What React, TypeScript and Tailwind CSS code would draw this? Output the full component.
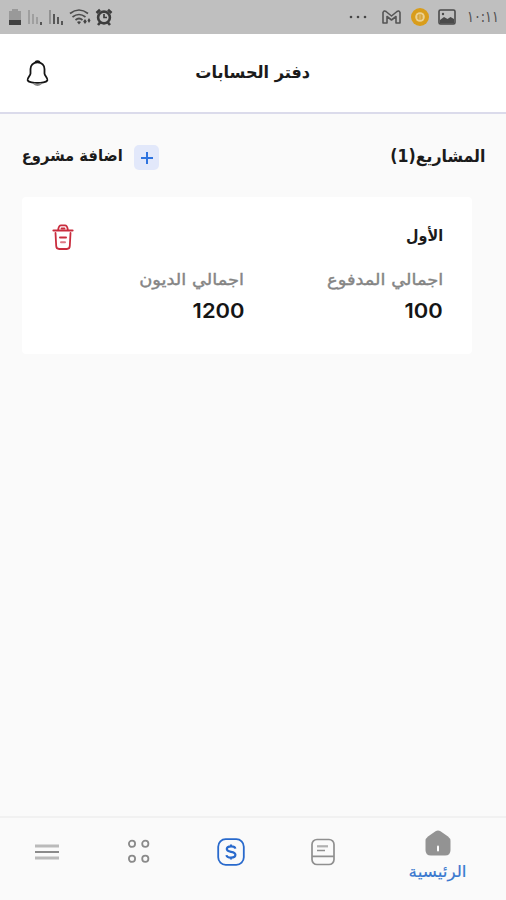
import type { ReactNode } from 'react'

interface Project {
  id: number
  name: string
  paid: number
  debts: number
}

const projects: Project[] = [{ id: 1, name: 'الأول', paid: 100, debts: 1200 }]

function StatusBar() {
  return (
    <div dir="ltr" className="flex h-[34px] shrink-0 items-center justify-between bg-[#bfbfbf] pl-[9px] pr-2 text-[#505050]">
      <div className="flex items-center">
        {/* Battery */}
        <svg className="h-[18px] w-3" viewBox="0 0 12 18">
          <path d="M3 1h6v2h3v14H0V3h3z" fill="#999" />
          <path d="M0 12h12v5H0z" fill="#414141" />
        </svg>
        {/* Signal */}
        <svg className="ml-[7px] h-[18px] w-4" viewBox="0 0 16 18" fill="none" strokeWidth="1.5">
          <path d="M1 2v14M5 6v10M9 9v7" stroke="#959595" />
          <path d="M13 14v3" stroke="#555" strokeWidth="2" />
        </svg>
        <svg className="ml-[5px] h-[18px] w-4" viewBox="0 0 16 18" fill="none" strokeWidth="1.8">
          <path d="M1 2v14" stroke="#8d8d8d" />
          <path d="M5 6v10M9 9v7M13 13v4" stroke="#4c4c4c" />
        </svg>
        {/* Wifi */}
        <svg className="ml-1 h-[18px] w-[22px]" viewBox="0 0 22 18" fill="none" stroke="#4c4c4c" strokeWidth="1.7">
          <path d="M1 5.5q9-7 18 0M3.5 9q6.5-5 13 0M6.5 12q3.5-3 7 0" />
          <path d="M8 14l2 2.5 2-2.5q-2-1.500-4 0z" fill="#444" stroke="none" />
          <path d="M16 11l1.800 2.500L16 16l-1.800-2.500zM20 10l1.500 2.500L20 15l-1.500-2.500z" fill="#444" stroke="none" />
        </svg>
        {/* Alarm */}
        <svg className="ml-1 h-[18px] w-[18px]" viewBox="0 0 18 18" fill="none" stroke="#3d3d3d">
          <circle cx="9" cy="9.500" r="5.900" strokeWidth="2.600" />
          <path d="M1.500 5L5 1.700M16.500 5L13 1.700M3 17l2.500-3M15 17l-2.500-3" strokeWidth="2.600" />
          <path d="M9 6v3.500h3" strokeWidth="1.700" />
        </svg>
      </div>
      <div className="flex items-center">
        <svg className="h-1 w-[18px]" viewBox="0 0 18 4" fill="#464646">
          <circle cx="2" cy="2" r="1.300" />
          <circle cx="9" cy="2" r="1.300" />
          <circle cx="16" cy="2" r="1.300" />
        </svg>
        {/* Mail */}
        <svg className="ml-[15px] h-[14px] w-[19px]" viewBox="0 0 19 14" fill="none" stroke="#555" strokeWidth="1.600">
          <path d="M1 13V2.500Q2 0 4 1.500L9.500 6 15 1.500Q17 0 18 2.500V13h-4V6.500L9.500 10 5 6.500V13z" strokeLinejoin="round" />
        </svg>
        {/* Coin */}
        <svg className="ml-[10px] h-[18px] w-[18px]" viewBox="0 0 18 18">
          <circle cx="9" cy="9" r="9" fill="#d99d1b" />
          <circle cx="9" cy="9" r="4.800" fill="#ecd190" />
          <path d="M7 7h4v4H7zM7 9h4" fill="none" stroke="#cf961f" />
        </svg>
        {/* Image */}
        <svg className="ml-[9px] h-4 w-[18px]" viewBox="0 0 18 16">
          <rect x="1" y="1" width="16" height="14" rx="1.500" fill="none" stroke="#4a4a4a" strokeWidth="1.600" />
          <path d="M2 11l4-3 3.500 2L12.500 8l3.500 2v4.500H2z" fill="#4a4a4a" />
          <circle cx="5" cy="5" r="1.200" fill="#4a4a4a" />
        </svg>
        <span className="ml-[11px] w-[31px] whitespace-nowrap text-[16px] leading-none">
          <span className="inline-block origin-left scale-x-[.8]">١٠:١١</span>
        </span>
      </div>
    </div>
  )
}

function Header() {
  return (
    <header className="grid h-20 shrink-0 grid-cols-3 items-center border-b-2 border-[#dbdbeb] bg-white px-[26px]">
      <span />
      <h1 className="mb-0.5 justify-self-center whitespace-nowrap text-[17px] font-bold leading-6 text-[#1b1b1b]">
        <span className="inline-block scale-x-[.945]">دفتر الحسابات</span>
      </h1>
      {/* Bell */}
      <svg className="h-[27px] w-[23px] justify-self-end" viewBox="0 0 23 27" fill="none" stroke="#151515">
        <path
          d="M11.500 2.300C7 2.300 4.500 5.500 4.500 9v4.500c0 2-3.200 4.500-2.900 6.500.300 1.500 2.200 2 4 2.300 3.800.700 8 .700 11.800 0 1.800-.300 3.700-.800 4-2.300.300-2-2.900-4.500-2.900-6.500V9c0-3.500-2.500-6.700-7-6.700z"
          strokeWidth="1.800"
        />
        <path d="M9.300 2.200q2.200-1.800 4.400 0" strokeWidth="2.200" />
        <path d="M8 23.500q3.500 3 7 0" stroke="#888" strokeWidth="2" />
      </svg>
    </header>
  )
}

function TrashIcon() {
  return (
    <svg className="h-[26px] w-[22px]" viewBox="0 0 22 26" fill="none" stroke="#c92d3e" strokeWidth="1.800" strokeLinecap="round">
      <path d="M1.500 6.500h19" strokeWidth="2.200" />
      <path d="M6.200 5.500C6.700 2.500 7.500 1.300 9 1.300h4c1.500 0 2.300 1.200 2.800 4.200M9.500 4.500h3" />
      <path d="M3.500 9l.700 13c.100 2 1 3 3 3h7.600c2 0 2.900-1 3-3l.700-13" />
      <path d="M8 13.500h6" strokeWidth="2" />
      <path d="M9 18.300h4" stroke="#dd7a85" strokeWidth="2" />
    </svg>
  )
}

function Stat({ label, value }: { label: ReactNode; value: number }) {
  return (
    <div className="flex flex-col items-start">
      <span className="h-6 whitespace-nowrap text-[16px] leading-6 text-[#858585] [-webkit-text-stroke:.4px_#858585]">
        <span className="inline-block origin-right scale-x-[1.115]">{label}</span>
      </span>
      <span className="mt-[5px] font-[Inter] text-[20.5px] font-semibold leading-7 text-[#151515]">
        <span className="inline-block origin-right scale-x-[1.07]">{value}</span>
      </span>
    </div>
  )
}

function ProjectCard({ project }: { project: Project }) {
  return (
    <article className="ml-[22px] mr-[34px] mt-[26px] h-[157px] rounded-[4px] bg-white pl-[30px] pr-[29px] pt-[26px]">
      <div className="flex h-7 items-center justify-between">
        <h3 className="mb-0.5 text-[16px] font-bold leading-6 text-[#1b1b1b]">
          <span className="inline-block origin-right scale-x-[.9]">{project.name}</span>
        </h3>
        <button>
          <TrashIcon />
        </button>
      </div>
      <div className="mt-[17px] grid grid-cols-[199px_1fr]">
        <Stat label="اجمالي المدفوع" value={project.paid} />
        <Stat label="اجمالي الديون" value={project.debts} />
      </div>
    </article>
  )
}

function BottomNav() {
  return (
    <nav className="grid h-[84px] shrink-0 grid-cols-[137px_92px_92px_92px_93px] border-t-2 border-[#f1f1f1] bg-[#fafafa] pt-[12px] text-[#8f8f8f]">
      {/* Home */}
      <div className="flex flex-col items-center">
        <svg className="h-[26px] w-[26px]" viewBox="0 0 26 26">
          <path d="M10.500 1.200q2.500-1.500 5 0l7.500 5.300q2.500 1.800 2.500 4.500v9q0 5.500-5.500 5.500H6q-5.500 0-5.500-5.500v-9q0-2.700 2.500-4.500z" fill="#939393" />
          <path d="M13 16.500v4" stroke="#fff" strokeWidth="2" strokeLinecap="round" />
        </svg>
        <span className="mt-1 whitespace-nowrap text-[16px] leading-6 text-[#3978cf] [-webkit-text-stroke:.2px_#3978cf]">
          <span className="inline-block scale-x-[1.05]">الرئيسية</span>
        </span>
      </div>
      {/* Ledger */}
      <div className="flex justify-center pt-2">
        <svg className="h-[28px] w-6" viewBox="0 0 24 28" fill="none" stroke="currentColor" strokeWidth="1.700">
          <rect x="1" y="1.500" width="22" height="25" rx="5" />
          <path d="M1 18.300h22M6 12.500h8" />
          <path d="M6 8.300h11" stroke="#b0b0b0" strokeWidth="2.200" />
        </svg>
      </div>
      {/* Accounts */}
      <div className="flex justify-center pt-2">
        <svg className="h-7 w-7" viewBox="0 0 28 28" fill="none" stroke="#2869cc" strokeWidth="1.800">
          <rect x="1.200" y="1.200" width="25.600" height="25.600" rx="7.500" />
          <path
            d="M18.300 10.600c-.200-1.400-1.900-2.200-4.300-2.200s-4.200.900-4.200 2.700 1.900 2.300 4.200 2.700 4.400 1.100 4.400 3-2 2.800-4.400 2.800-4.300-.900-4.500-2.500M14 6.500v2M14 19.500v2"
            strokeWidth="2.200"
          />
        </svg>
      </div>
      {/* More */}
      <div className="flex justify-center pt-[8px]">
        <svg className="h-[26px] w-6" viewBox="0 0 24 26" fill="none" stroke="#8a8a8a" strokeWidth="1.800">
          <circle cx="5" cy="5.800" r="3.100" />
          <circle cx="18.300" cy="5.800" r="3.100" />
          <circle cx="5" cy="20.800" r="3.100" />
          <circle cx="18.300" cy="20.800" r="3.100" />
        </svg>
      </div>
      {/* Menu */}
      <div className="flex justify-center pt-[13px]">
        <svg className="h-[18px] w-6" viewBox="0 0 24 18" fill="none">
          <path d="M0 3h24M0 15h24" stroke="#bababa" strokeWidth="3" />
          <path d="M0 9h24" stroke="#8b8b8b" strokeWidth="2" />
        </svg>
      </div>
    </nav>
  )
}

export default function App() {
  return (
    <div dir="rtl" className="flex h-[900px] w-[506px] flex-col overflow-hidden bg-[#fafafa] font-['DejaVu_Sans',sans-serif]">
      <StatusBar />
      <Header />
      <main className="flex-1">
        <div className="flex h-[57px] items-end justify-between pl-[22px] pr-[21px]">
          <h2 className="mb-px whitespace-nowrap text-[17px] font-bold leading-7 text-[#1b1b1b]">
            <span className="inline-block origin-right scale-x-[.93]">المشاريع(1)</span>
          </h2>
          <button className="flex items-center gap-[11px]">
            <span className="flex h-[25px] w-[25px] items-center justify-center rounded-[5px] bg-[#e2e8fa]">
              <svg className="h-3 w-3" viewBox="0 0 12 12" stroke="#2e73df" strokeWidth="2">
                <path d="M0 6h12M6 0v12" />
              </svg>
            </span>
            <span className="mb-[3px] w-[101px] whitespace-nowrap text-[16px] font-bold leading-6 text-[#1b1b1b]">
              <span className="inline-block origin-right scale-x-[.92]">اضافة مشروع</span>
            </span>
          </button>
        </div>
        {projects.map((project) => (
          <ProjectCard key={project.id} project={project} />
        ))}
      </main>
      <BottomNav />
    </div>
  )
}
